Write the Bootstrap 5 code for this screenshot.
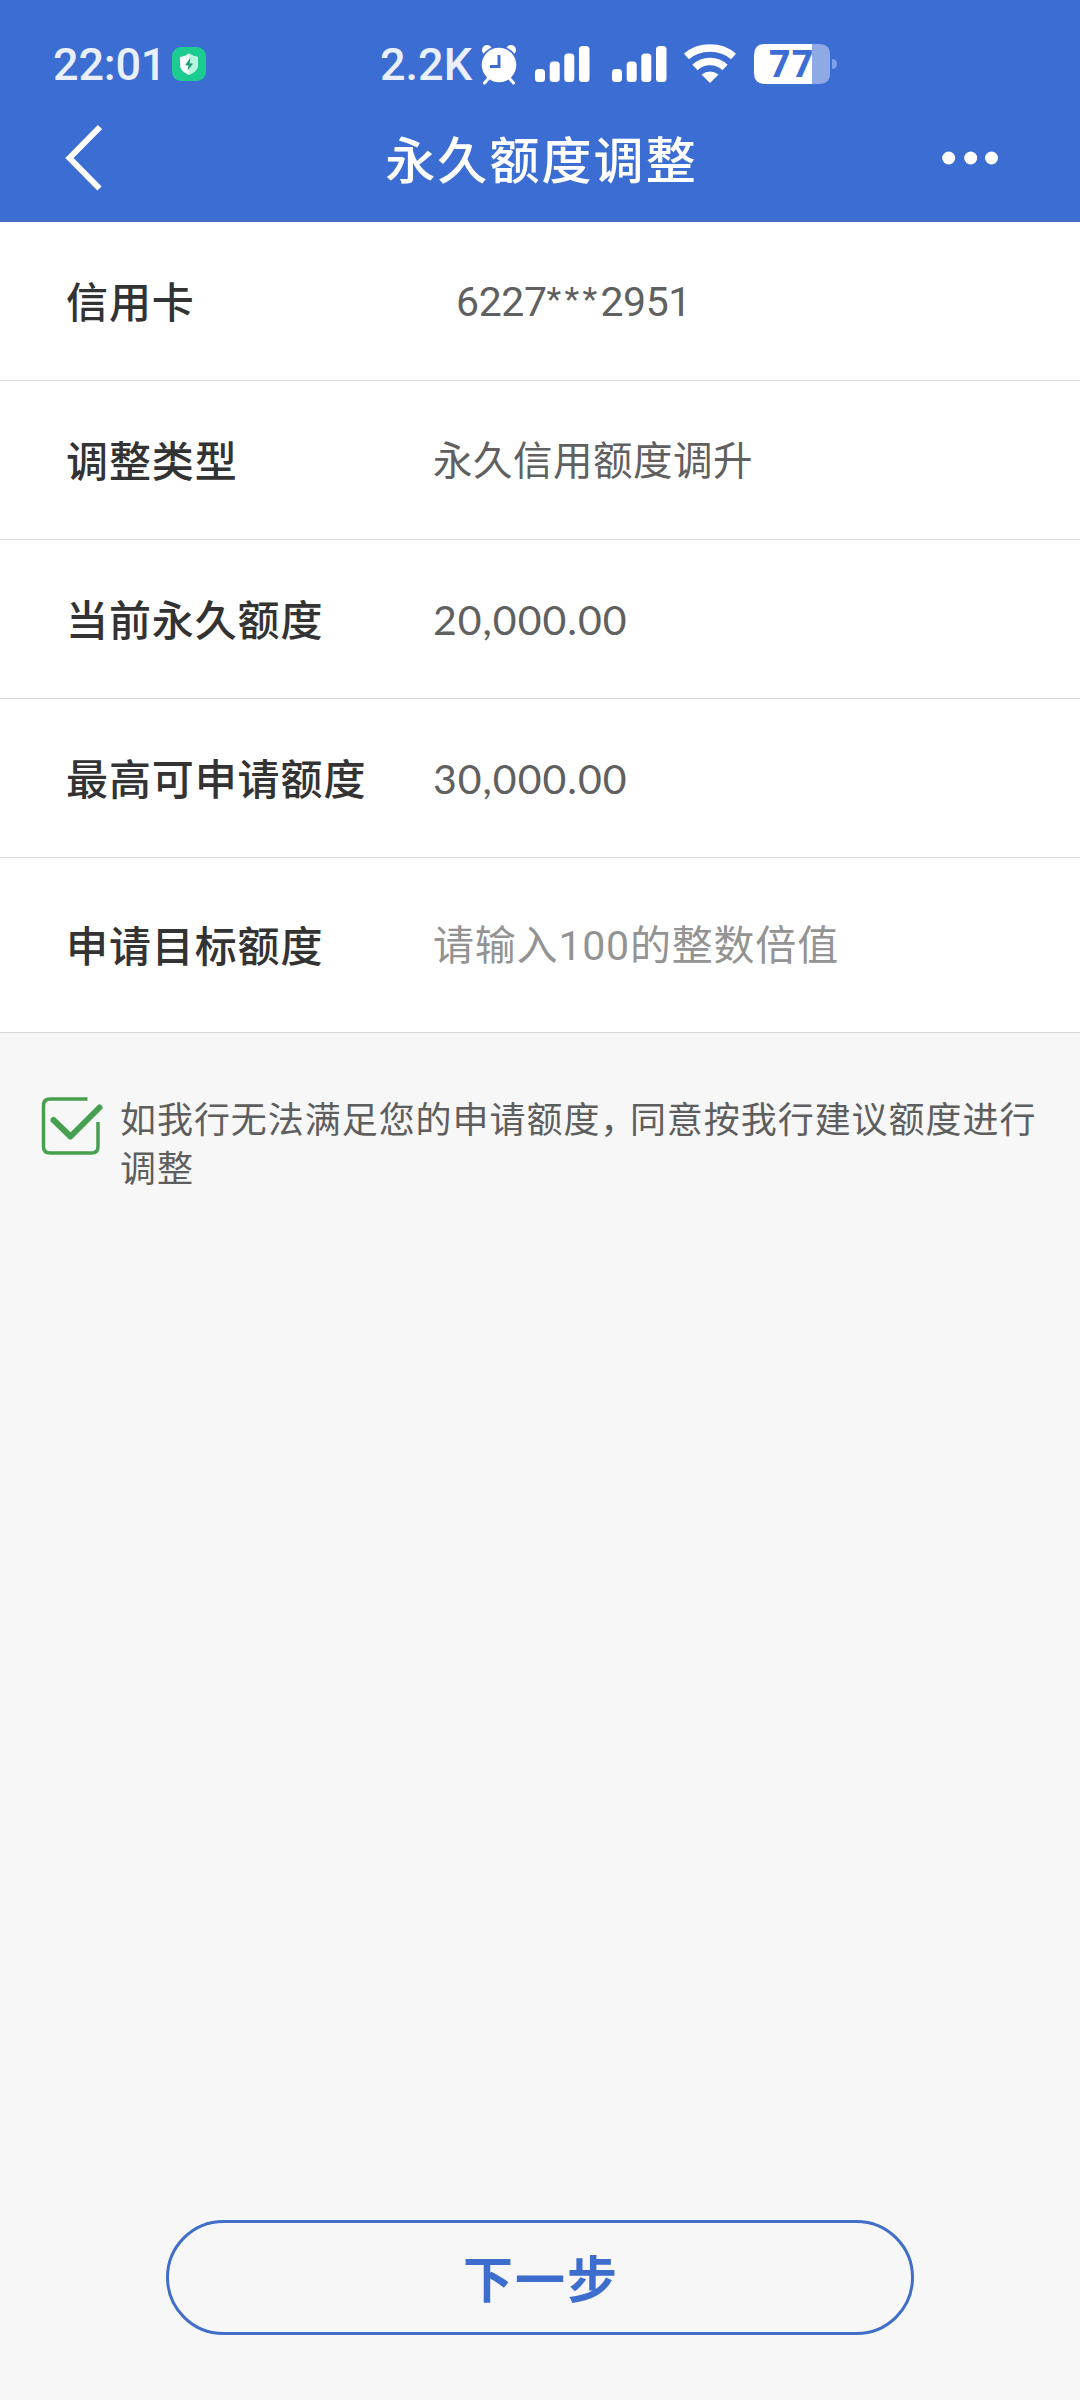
<!DOCTYPE html>
<html lang="zh-CN">
<head>
<meta charset="utf-8">
<meta name="viewport" content="width=device-width, initial-scale=1">
<title>永久额度调整</title>
<link href="https://cdn.jsdelivr.net/npm/bootstrap@5.3.0/dist/css/bootstrap.min.css" rel="stylesheet">
<style>
  body { font-family: Roboto, "Noto Sans CJK SC", sans-serif; background: #f7f7f8; color: #333; }
  svg { display: block; flex: none; overflow: visible; }
  .screen { height: 2400px; }
  .app-header { background: #3c6dd2; height: 222px; border-bottom: 2px solid #456fc4; }
  .status-bar { height: 94px; padding: 34px 0 0 53px; color: #e9effc; }
  .status-text { font-size: 45px; line-height: 60px; font-weight: 500; padding-top: 1px; }
  .clock-text { width: 119px; letter-spacing: -.2px; }
  .rate-text { width: 101px; margin-left: 174px; letter-spacing: 0; }
  .title-bar { height: 128px; padding: 0 82px 0 64px; }
  .page-title { font-size: 50px; letter-spacing: 2.1px; line-height: 64px; padding: 7px 0 0 37px; font-weight: 500; }
  .field-row { height: 159px; padding: 4px 0 0 66px; border-bottom: 1px solid #d9d9da; background: #fff; }
  .field-row.entry { height: 175px; }
  .field-label { width: 367px; font-size: 42px; letter-spacing: .9px; color: #333; font-weight: 500; }
  .field-value { font-size: 39.5px; letter-spacing: .5px; color: #606060; }
  .card-no { font-size: 41px; letter-spacing: -.4px; padding-left: 23px; }
  .masked { font-size: 34px; letter-spacing: 3.3px; vertical-align: 5px; line-height: 1; }
  .amount { font-family: Lato, sans-serif; font-size: 41px; letter-spacing: 1px; padding-bottom: 3px; }
  .field-input { font-size: 41px; letter-spacing: .8px; }
  .field-input::placeholder { color: #939393; opacity: 1; }
  .consent { padding: 64px 28px 0 41px; gap: 17px; }
  .consent-text { font-size: 36px; letter-spacing: .95px; line-height: 49px; color: #5e5e5e; }
  .comma { font-feature-settings: "halt"; letter-spacing: 11.5px; }
  .next-btn { width: 748px; height: 115px; margin-bottom: 65px; padding: 8px 0 0 2px; border: 3px solid #416fc8; color: #3d6dcd; font-size: 50px; font-weight: 700; letter-spacing: 2px; }
</style>
</head>
<body>
<div class="screen d-flex flex-column">
  <header class="app-header">
    <div class="status-bar d-flex align-items-center">
      <span class="status-text clock-text text-nowrap">22:01</span>
      <svg width="34" height="34" viewBox="0 0 34 34"><rect width="34" height="34" rx="9" fill="#1bcb8f"/><path d="M17 6.500Q21 9.500 26 10V18Q26 24 17 28Q8 24 8 18V10Q13 9.500 17 6.500Z" fill="#f8fffc"/><path d="M17 6.500Q21 9.500 26 10V18Q26 24 17 28Z" fill="#b9f4df"/><path d="M18.500 11L13 18.200H16.500L15.500 23.500L21 16.500H17.500Z" fill="#149b72"/></svg>
      <span class="status-text rate-text text-nowrap">2.2K</span>
      <svg width="36" height="40" viewBox="0 0 36 40"><g fill="#fff"><circle cx="6" cy="6" r="5"/><circle cx="30" cy="6" r="5"/></g><circle cx="18" cy="21" r="19" fill="#3c6dd2"/><path d="M7 35L3.500 39M29 35L32.500 39" stroke="#fff" stroke-width="3" stroke-linecap="round"/><circle cx="18" cy="21" r="17.300" fill="#fff"/><path d="M18 11V22.500H9" fill="none" stroke="#3c6dd2" stroke-width="3"/></svg>
      <svg class="ms-3" width="58" height="38" viewBox="-2 0 58 38" fill="#fff"><rect x="0" y="24" width="10" height="13" rx="3.500"/><rect x="14.700" y="16.500" width="10" height="20.500" rx="3.500"/><rect x="29.300" y="8.500" width="10" height="28.500" rx="3.500"/><rect x="44" y="1" width="10.500" height="36" rx="3.500"/></svg>
      <svg style="margin-left:19px" width="58" height="38" viewBox="-2 0 58 38" fill="#fff"><rect x="0" y="24" width="10" height="13" rx="3.500"/><rect x="14.700" y="16.500" width="10" height="20.500" rx="3.500"/><rect x="29.300" y="8.500" width="10" height="28.500" rx="3.500"/><rect x="44" y="1" width="10.500" height="36" rx="3.500"/></svg>
      <svg class="ms-3" width="52" height="40" viewBox="0 0 52 40"><path d="M2.500 12.500Q12 4 26 4T49.500 12.500" fill="none" stroke="#fff" stroke-width="7.500"/><path d="M11 23.500Q17 17.500 26 17.500T41 23.500" fill="none" stroke="#fff" stroke-width="7.500"/><path d="M17.500 30.500Q26 24.500 34.500 30.500L26 39Z" fill="#fff"/></svg>
      <svg style="margin-left:18px" width="84" height="40" viewBox="0 0 84 40"><path d="M58 0H65Q76 0 76 11V29Q76 40 65 40H58Z" fill="#8fa8e6"/><path d="M11 0H58V40H11Q0 40 0 29V11Q0 0 11 0Z" fill="#fff"/><path d="M78 15Q83 15 83 20T78 25Z" fill="#7ea0ea"/><text x="15" y="33" font-family="Open Sans" font-weight="700" font-size="37" letter-spacing="1.500" fill="#3c6dd2">77</text></svg>
    </div>
    <nav class="title-bar d-flex align-items-center justify-content-between">
      <svg width="40" height="68" viewBox="0 0 40 68"><path d="M36 3L5.500 34L35.500 64.500" fill="none" stroke="#fff" stroke-width="6"/></svg>
      <h1 class="page-title text-white mb-0">永久额度调整</h1>
      <svg width="56" height="14" viewBox="0 0 56 14" fill="#fff"><circle cx="6.700" cy="7" r="6.500"/><circle cx="28.700" cy="7" r="6.500"/><circle cx="49.500" cy="7" r="6.500"/></svg>
    </nav>
  </header>

  <main class="flex-grow-1 d-flex flex-column">
    <div class="field-row d-flex align-items-center"><span class="field-label">信用卡</span><span class="field-value card-no">6227<span class="masked">***</span>2951</span></div>
    <div class="field-row d-flex align-items-center"><span class="field-label">调整类型</span><span class="field-value">永久信用额度调升</span></div>
    <div class="field-row d-flex align-items-center"><span class="field-label">当前永久额度</span><span class="field-value amount">20,000.00</span></div>
    <div class="field-row d-flex align-items-center"><span class="field-label">最高可申请额度</span><span class="field-value amount">30,000.00</span></div>
    <div class="field-row entry d-flex align-items-center"><label class="field-label" for="target">申请目标额度</label><input id="target" class="field-input form-control border-0 rounded-0 p-0 w-50 bg-transparent" type="text" placeholder="请输入100的整数倍值"></div>
    <div class="consent d-flex align-items-start">
      <svg width="62" height="60" viewBox="0 0 62 60" fill="none" stroke="#47a04f"><path d="M46.500 2H9Q2.500 2 2.500 8.500V49.500Q2.500 56 9 56H50.500Q57 56 57 49.500V25" stroke-width="3.500"/><path d="M12.500 23L29.500 39.500L58.500 10.500" stroke-width="6" stroke-linecap="round" stroke-linejoin="round"/></svg>
      <p class="consent-text mb-0">如我行无法满足您的申请额度<span class="comma">，</span>同意按我行建议额度进行调整</p>
    </div>
    <button type="button" class="next-btn btn rounded-pill mt-auto mx-auto">下一步</button>
  </main>
</div>
<script src="https://cdn.jsdelivr.net/npm/bootstrap@5.3.0/dist/js/bootstrap.bundle.min.js"></script>
</body>
</html>
